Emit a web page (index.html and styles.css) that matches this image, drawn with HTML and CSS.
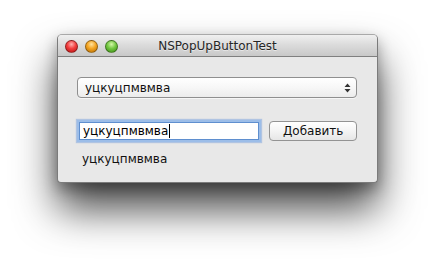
FILE: index.html
```html
<!DOCTYPE html>
<html>
<head>
<meta charset="utf-8">
<link rel="stylesheet" href="styles.css">
</head>
<body>
<div class="window">
  <div class="titlebar">
    <div class="lights">
      <span class="light red"></span>
      <span class="light yellow"></span>
      <span class="light green"></span>
    </div>
    <div class="title">NSPopUpButtonTest</div>
  </div>
  <div class="content">
    <div class="popup">
      <span class="popup-text">уцкуцпмвмва</span>
      <svg class="arrows" width="7" height="10" viewBox="0 0 7 10"><path d="M3.5 0.5 L6.5 4 L0.5 4 Z M0.5 6 L6.5 6 L3.5 9.5 Z" fill="#333"/></svg>
    </div>
    <div class="row">
      <div class="field"><span>уцкуцпмвмва</span><span class="caret"></span></div>
      <div class="button">Добавить</div>
    </div>
    <div class="label">уцкуцпмвмва</div>
  </div>
</div>
</body>
</html>
```

FILE: styles.css
```css
html, body {
  margin: 0;
  padding: 0;
  background: #ffffff;
}
body {
  width: 435px;
  height: 262px;
  overflow: hidden;
  font-family: "DejaVu Sans", "Liberation Sans", sans-serif;
  font-size: 12px;
  color: #111;
}
.window {
  margin: 34px 0 0 57px;
  width: 321px;
  height: 149px;
  box-sizing: border-box;
  border: 1px solid #7b7b7b;
  border-top-color: #a9a9a9;
  border-radius: 5px 5px 4px 4px;
  background: #e8e8e8;
  box-shadow: 0 26px 42px rgba(0,0,0,0.72), 0 6px 14px rgba(0,0,0,0.3);
  display: flex;
  flex-direction: column;
  overflow: hidden;
}
.titlebar {
  height: 21px;
  flex: none;
  position: relative;
  display: flex;
  align-items: center;
  background: linear-gradient(#f0f0f0, #dcdcdc 45%, #c8c8c8);
  border-bottom: 1px solid #7f7f7f;
}
.lights {
  display: flex;
  gap: 7px;
  margin-left: 7px;
  margin-top: 1px;
}
.light {
  width: 13px;
  height: 13px;
  border-radius: 50%;
  box-sizing: border-box;
  border: 1px solid rgba(0,0,0,0.35);
}
.red { background: radial-gradient(circle at 50% 30%, #ffb0b0 0, #f33f3f 45%, #b30f0f 100%); }
.yellow { background: radial-gradient(circle at 50% 30%, #ffe3a0 0, #f5a623 45%, #b36a00 100%); }
.green { background: radial-gradient(circle at 50% 30%, #d5f7a9 0, #74c943 45%, #3a8a12 100%); }
.title {
  position: absolute;
  left: 0;
  right: 0;
  top: 4px;
  text-align: center;
  font-size: 12px;
  color: #262626;
  text-shadow: 0 1px 0 rgba(255,255,255,0.5);
}
.content {
  padding: 20px 20px 0 19px;
  display: flex;
  flex-direction: column;
}
.popup {
  height: 21px;
  width: 280px;
  box-sizing: border-box;
  border: 1px solid #8f8f8f;
  border-radius: 4px;
  background: linear-gradient(#ffffff, #f7f7f7 50%, #ececec);
  box-shadow: 0 1px 0 rgba(255,255,255,0.6);
  display: flex;
  align-items: center;
  justify-content: space-between;
  padding: 0 5px 0 7px;
}
.popup-text { color: #111; }
.arrows { display: block; }
.row {
  margin-top: 23px;
  display: flex;
  align-items: center;
  gap: 10px;
}
.field {
  margin-left: 2px;
  width: 181px;
  height: 18px;
  box-sizing: border-box;
  background: #fff;
  border: 1px solid #5f8fcf;
  box-shadow: 0 0 0 2px #9cbde8, 0 0 1px 3px rgba(120,160,220,0.5);
  display: flex;
  align-items: center;
  padding-left: 3px;
  color: #000;
}
.caret {
  width: 1px;
  height: 14px;
  background: #000;
  margin-left: 1px;
}
.button {
  width: 88px;
  height: 20px;
  box-sizing: border-box;
  border: 1px solid #939393;
  border-radius: 4px;
  background: linear-gradient(#ffffff, #f4f4f4 50%, #e6e6e6);
  display: flex;
  align-items: center;
  justify-content: center;
  color: #111;
}
.label {
  margin-top: 11px;
  margin-left: 5px;
  color: #111;
}
```
